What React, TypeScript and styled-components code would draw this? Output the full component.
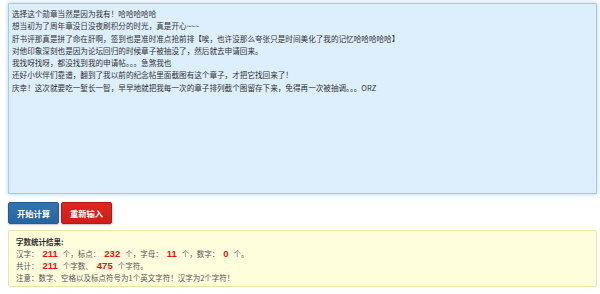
import React from "react";
import styled, { createGlobalStyle } from "styled-components";

const Global = createGlobalStyle`
  html, body { margin: 0; padding: 0; background: #fff; }
  body { font-family: "Noto Sans CJK SC", "Noto Sans", sans-serif; }
`;

const Page = styled.div`
  display: flex;
  flex-direction: column;
  padding: 3px 3px 0 8px;
  width: 600px;
  box-sizing: border-box;
`;

const Editor = styled.textarea`
  box-sizing: border-box;
  width: 100%;
  height: 191px;
  margin: 0;
  padding: 4px 3px;
  border: 1px solid #9fcbef;
  border-radius: 1px;
  background: #ddeefc;
  box-shadow: 0 0 4px rgba(100, 170, 235, 0.55);
  color: #333;
  font-family: "Noto Sans CJK SC", sans-serif;
  font-size: 7.6px;
  line-height: 12.3px;
  resize: none;
  outline: none;
`;

const Actions = styled.div`
  display: flex;
  gap: 2px;
  margin-top: 8px;
`;

const Button = styled.button<{ $tone: "blue" | "red" }>`
  box-sizing: border-box;
  width: 51px;
  height: 22px;
  padding: 0;
  border: 1px solid ${(p) => (p.$tone === "blue" ? "#225c92" : "#b71714")};
  border-radius: 2px;
  background: ${(p) =>
    p.$tone === "blue"
      ? "linear-gradient(#2f74b1, #2766a0)"
      : "linear-gradient(#e0261f, #cf1d17)"};
  box-shadow: 0 1px 2px rgba(0, 0, 0, 0.25);
  color: #fff;
  font-family: "Noto Sans CJK SC", sans-serif;
  font-size: 8.3px;
  font-weight: 700;
  cursor: pointer;
`;

const Result = styled.div`
  box-sizing: border-box;
  margin-top: 6px;
  height: 57px;
  padding: 5px 6px 4px 7px;
  border: 1px solid #ebe5a4;
  border-radius: 2px;
  background: #fefedd;
  color: #555;
  font-size: 7.5px;
  line-height: 12px;
`;

const Title = styled.div`
  color: #333;
  font-weight: 700;
`;

const Line = styled.div`
  white-space: pre;
`;

const Num = styled.b`
  color: #f20d0d;
  font-family: "Liberation Sans", Arial, sans-serif;
  font-size: 9.5px;
  font-weight: 700;
  margin: 0 5px 0 4px;
`;

const text = `选择这个勋章当然是因为我有！哈哈哈哈哈
想当初为了周年章没日没夜刷积分的时光，真是开心~~~
肝书评那真是拼了命在肝啊，签到也是准时准点抢前排【唉，也许没那么夸张只是时间美化了我的记忆哈哈哈哈哈】
对他印象深刻也是因为论坛回归的时候章子被抽没了，然后就去申请回来。
我找呀找呀，都没找到我的申请帖。。。急煞我也
还好小伙伴们靠谱，翻到了我以前的纪念帖里面截图有这个章子，才把它找回来了！
庆幸！这次就要吃一堑长一智，早早地就把我每一次的章子排列截个图留存下来，免得再一次被抽调。。。ORZ`;

export default function App() {
  return (
    <>
      <Global />
      <Page>
        <Editor defaultValue={text} spellCheck={false} />
        <Actions>
          <Button $tone="blue">开始计算</Button>
          <Button $tone="red">重新输入</Button>
        </Actions>
        <Result>
          <Title>字数统计结果:</Title>
          <Line>
            汉字：<Num>211</Num>个，标点：<Num>232</Num>个，字母：<Num>11</Num>个，数字：<Num>0</Num>个。
          </Line>
          <Line>
            共计：<Num>211</Num>个字数、<Num>475</Num>个字符。
          </Line>
          <Line>注意：数字、空格以及标点符号为1个英文字符！汉字为2个字符！</Line>
        </Result>
      </Page>
    </>
  );
}
